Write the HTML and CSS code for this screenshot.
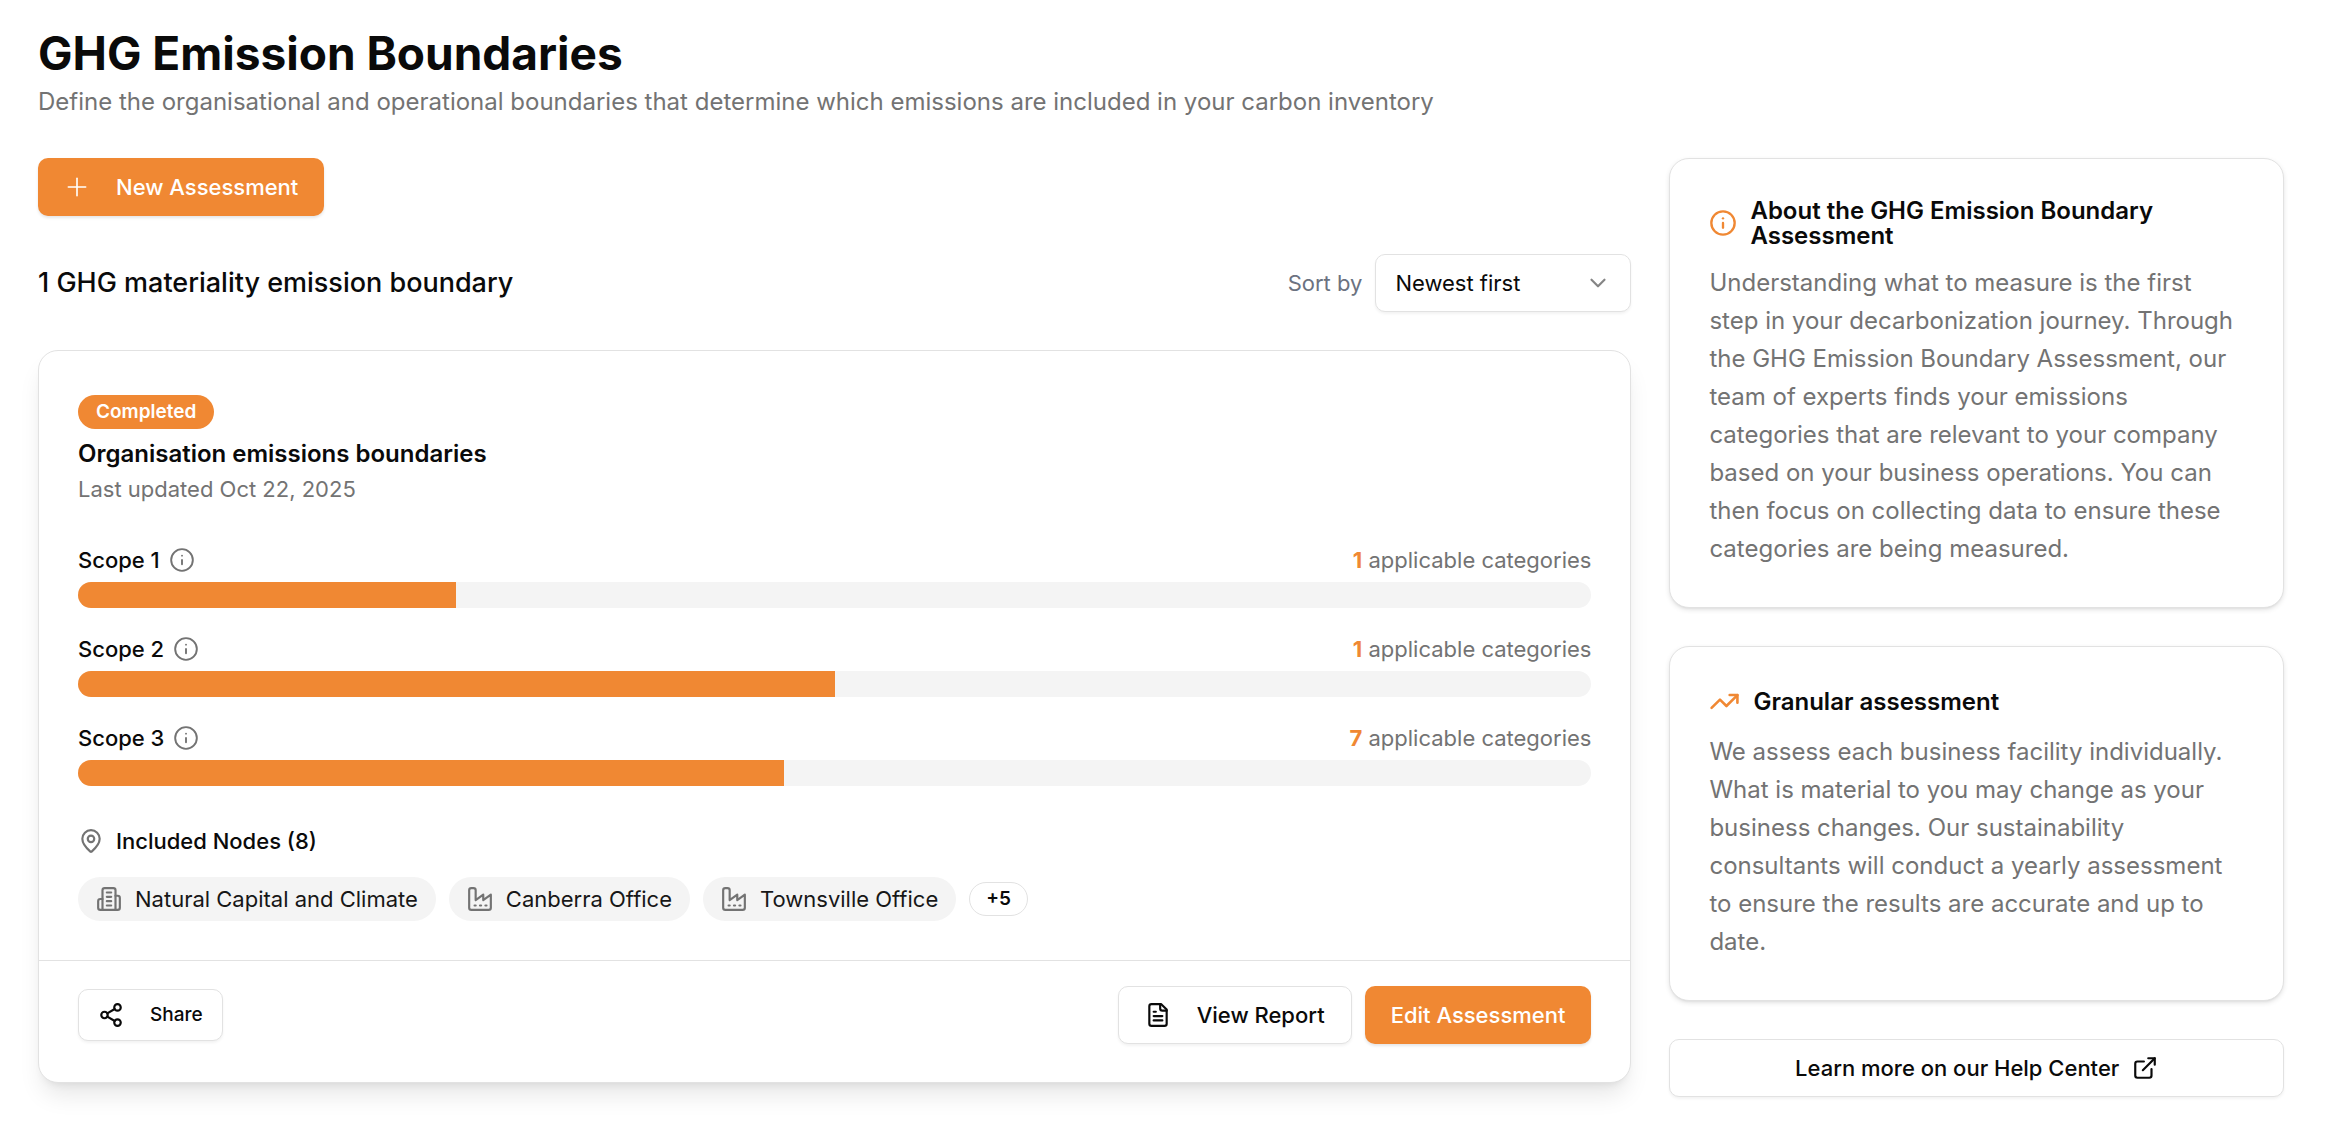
FILE: index.html
```html
<!DOCTYPE html>
<html lang="en">

<head>
    <meta charset="UTF-8">
    <meta name="viewport" content="width=device-width, initial-scale=1.0">
    <link rel="stylesheet" href="styles.css">

    <title>GHG Emission Boundaries</title>
</head>

<body>

    <header class="page-header">
        <h1>GHG Emission Boundaries</h1>
        <p>Define the organisational and operational boundaries that determine which emissions are included in your carbon inventory</p>
    </header>

    <div class="layout">

        <main class="content">
            <button type="button" class="btn btn-primary btn-new">
                <svg class="icon" viewBox="0 0 24 24"><path d="M4 12h16"/><path d="M12 4v16"/></svg>
                New Assessment
            </button>

            <div class="list-header">
                <h2>1 GHG materiality emission boundary</h2>
                <div class="sort">
                    <label for="sort">Sort by</label>
                    <div class="select-wrap">
                        <select id="sort">
                            <option>Newest first</option>
                            <option>Oldest first</option>
                        </select>
                        <svg class="icon chevron" viewBox="0 0 24 24"><path d="m6 9 6 6 6-6"/></svg>
                    </div>
                </div>
            </div>

            <article class="card assessment">
                <div class="card-body">
                    <span class="badge">Completed</span>
                    <h3>Organisation emissions boundaries</h3>
                    <p class="updated">Last updated Oct 22, 2025</p>

                    <div class="scopes">
                        <div class="scope">
                            <div class="scope-head">
                                <span class="scope-name">Scope 1</span>
                                <svg class="icon" viewBox="0 0 24 24"><circle cx="12" cy="12" r="10"/><path d="M12 16v-4"/><path d="M12 8h.01"/></svg>
                                <span class="scope-count"><b>1</b> applicable categories</span>
                            </div>
                            <div class="bar"><div class="bar-fill" style="width: 25%"></div></div>
                        </div>
                        <div class="scope">
                            <div class="scope-head">
                                <span class="scope-name">Scope 2</span>
                                <svg class="icon" viewBox="0 0 24 24"><circle cx="12" cy="12" r="10"/><path d="M12 16v-4"/><path d="M12 8h.01"/></svg>
                                <span class="scope-count"><b>1</b> applicable categories</span>
                            </div>
                            <div class="bar"><div class="bar-fill" style="width: 50%"></div></div>
                        </div>
                        <div class="scope">
                            <div class="scope-head">
                                <span class="scope-name">Scope 3</span>
                                <svg class="icon" viewBox="0 0 24 24"><circle cx="12" cy="12" r="10"/><path d="M12 16v-4"/><path d="M12 8h.01"/></svg>
                                <span class="scope-count"><b>7</b> applicable categories</span>
                            </div>
                            <div class="bar"><div class="bar-fill" style="width: 46.67%"></div></div>
                        </div>
                    </div>

                    <div class="nodes-title">
                        <svg class="icon" viewBox="0 0 24 24"><path d="M20 10c0 4.993-5.539 10.193-7.399 11.799a1 1 0 0 1-1.202 0C9.539 20.193 4 14.993 4 10a8 8 0 0 1 16 0"/><circle cx="12" cy="10" r="3"/></svg>
                        <h4>Included Nodes (8)</h4>
                    </div>
                    <div class="nodes">
                        <span class="chip">
                            <svg class="icon" viewBox="0 0 24 24"><path d="M6 22V4a2 2 0 0 1 2-2h8a2 2 0 0 1 2 2v18Z"/><path d="M6 12H4a2 2 0 0 0-2 2v6a2 2 0 0 0 2 2h2"/><path d="M18 9h2a2 2 0 0 1 2 2v9a2 2 0 0 1-2 2h-2"/><path d="M10 6h4"/><path d="M10 10h4"/><path d="M10 14h4"/><path d="M10 18h4"/></svg>
                            Natural Capital and Climate
                        </span>
                        <span class="chip">
                            <svg class="icon" viewBox="0 0 24 24"><path d="M2 20a2 2 0 0 0 2 2h16a2 2 0 0 0 2-2V8l-7 5V8l-7 5V4a2 2 0 0 0-2-2H4a2 2 0 0 0-2 2Z"/><path d="M17 18h1"/><path d="M12 18h1"/><path d="M7 18h1"/></svg>
                            Canberra Office
                        </span>
                        <span class="chip">
                            <svg class="icon" viewBox="0 0 24 24"><path d="M2 20a2 2 0 0 0 2 2h16a2 2 0 0 0 2-2V8l-7 5V8l-7 5V4a2 2 0 0 0-2-2H4a2 2 0 0 0-2 2Z"/><path d="M17 18h1"/><path d="M12 18h1"/><path d="M7 18h1"/></svg>
                            Townsville Office
                        </span>
                        <span class="chip-more">+5</span>
                    </div>
                </div>

                <div class="card-footer">
                    <button type="button" class="btn btn-outline btn-small">
                        <svg class="icon" viewBox="0 0 24 24"><circle cx="18" cy="5" r="3"/><circle cx="6" cy="12" r="3"/><circle cx="18" cy="19" r="3"/><path d="m8.59 13.51 6.83 3.98"/><path d="m15.41 6.51-6.82 3.98"/></svg>
                        Share
                    </button>
                    <div class="actions">
                        <button type="button" class="btn btn-outline btn-report">
                            <svg class="icon" viewBox="0 0 24 24"><path d="M15 2H6a2 2 0 0 0-2 2v16a2 2 0 0 0 2 2h12a2 2 0 0 0 2-2V7Z"/><path d="M14 2v4a2 2 0 0 0 2 2h4"/><path d="M10 9H8"/><path d="M16 13H8"/><path d="M16 17H8"/></svg>
                            View Report
                        </button>
                        <button type="button" class="btn btn-primary">Edit Assessment</button>
                    </div>
                </div>
            </article>
        </main>

        <aside class="sidebar">
            <section class="card info">
                <div class="info-title">
                    <svg class="icon icon-circle" viewBox="0 0 24 24"><circle cx="12" cy="12" r="10"/><path d="M12 16v-4"/><path d="M12 8h.01"/></svg>
                    <h3>About the GHG Emission Boundary Assessment</h3>
                </div>
                <p>Understanding what to measure is the first step in your decarbonization journey. Through the GHG Emission Boundary Assessment, our team of experts finds your emissions categories that are relevant to your company based on your business operations. You can then focus on collecting data to ensure these categories are being measured.</p>
            </section>

            <section class="card info">
                <div class="info-title">
                    <svg class="icon icon-trend" viewBox="0 0 24 24"><path d="M22 7 13.5 15.5 8.5 10.5 2 17"/><path d="M16 7h6v6"/></svg>
                    <h3>Granular assessment</h3>
                </div>
                <p>We assess each business facility individually. What is material to you may change as your business changes. Our sustainability consultants will conduct a yearly assessment to ensure the results are accurate and up to date.</p>
            </section>

            <a href="#" class="btn btn-outline help-link">
                Learn more on our Help Center
                <svg class="icon" viewBox="0 0 24 24"><path d="M15 3h6v6"/><path d="M10 14 21 3"/><path d="M18 13v6a2 2 0 0 1-2 2H5a2 2 0 0 1-2-2V8a2 2 0 0 1 2-2h6"/></svg>
            </a>
        </aside>

    </div> <!-- layout end -->

</body>

</html>
```
FILE: styles.css
```css
*{
    box-sizing: border-box;
    padding: 0;
    margin: 0;
}
body{
    font-family: Inter, "Noto Sans", sans-serif;
    font-size: 22px;
    line-height: 32px;
    color: #0a0a0a;
    background-color: #fff;
    padding: 25px 44px 38px 38px;
}
button, select{
    font: inherit;
    color: inherit;
}
.icon{
    width: 26px;
    height: 26px;
    flex: none;
    fill: none;
    stroke: currentColor;
    stroke-width: 2;
    stroke-linecap: round;
    stroke-linejoin: round;
}

/* header */
.page-header{
    margin-bottom: 36px;
}
.page-header h1{
    font-size: 46px;
    font-weight: 700;
    line-height: 56px;
}
.page-header p{
    font-size: 24px;
    line-height: 41px;
    color: #737373;
}

.layout{
    display: grid;
    grid-template-columns: repeat(7, 1fr);
    gap: 38px;
    align-items: start;
}
.content{
    grid-column: span 5;
}
.sidebar{
    grid-column: span 2;
    display: flex;
    flex-direction: column;
    gap: 38px;
}

/* buttons */
.btn{
    display: flex;
    align-items: center;
    justify-content: center;
    height: 58px;
    padding: 0 26px;
    border: none;
    border-radius: 10px;
    font-weight: 500;
    box-shadow: 0 2px 3px rgba(0, 0, 0, .1);
}
.btn-primary{
    background-color: #f08833;
    color: #fff;
}
.btn-outline{
    background-color: #fff;
    border: 1px solid #e2e2e2;
    box-shadow: 0 2px 3px rgba(0, 0, 0, .05);
}
.btn-new{
    gap: 26px;
}
.btn-new .icon{
    stroke-width: 1.5;
}
.btn-small{
    height: 52px;
    padding: 0 19px;
    gap: 26px;
    font-size: 19px;
}
.btn-report{
    gap: 26px;
}

/* list header */
.list-header{
    display: flex;
    align-items: center;
    justify-content: space-between;
    margin: 38px 0;
}
.list-header h2{
    font-size: 27px;
    font-weight: 500;
}
.sort{
    display: flex;
    align-items: center;
    gap: 13px;
}
.sort label{
    color: #6b7280;
}
.select-wrap{
    position: relative;
}
.select-wrap select{
    appearance: none;
    width: 256px;
    height: 58px;
    padding: 0 19px;
    border: 1px solid #e2e2e2;
    border-radius: 10px;
    background-color: #fff;
    box-shadow: 0 2px 3px rgba(0, 0, 0, .05);
}
.chevron{
    position: absolute;
    top: 16px;
    right: 20px;
    color: #858585;
    pointer-events: none;
}

/* cards */
.card{
    border: 1px solid #e2e2e2;
    border-radius: 20px;
    background-color: #fff;
}
.assessment{
    box-shadow: 0 16px 24px -5px rgba(0, 0, 0, .1), 0 6px 10px -6px rgba(0, 0, 0, .1);
}
.card-body{
    padding: 44px 39px 39px;
}
.badge{
    display: block;
    width: fit-content;
    padding: 1px 18px;
    border-radius: 17px;
    background-color: #f08833;
    color: #fff;
    font-size: 19px;
    font-weight: 600;
}
.card h3{
    font-size: 24px;
    font-weight: 600;
}
.assessment h3{
    margin-top: 9px;
}
.updated{
    margin-top: 3px;
    color: #737373;
}
.scopes{
    display: flex;
    flex-direction: column;
    gap: 25px;
    margin-top: 39px;
}
.scope-head{
    display: flex;
    align-items: center;
    gap: 9px;
    margin-bottom: 6px;
    color: #737373;
}
.scope-head .icon{
    stroke-width: 1.75;
}
.scope-name{
    font-weight: 500;
    color: #0a0a0a;
}
.scope-count{
    margin-left: auto;
}
.scope-count b{
    font-weight: 700;
    color: #f08833;
}
.bar{
    height: 26px;
    border-radius: 13px;
    background-color: #f4f4f4;
    overflow: hidden;
}
.bar-fill{
    height: 100%;
    background-color: #f08833;
}

/* nodes */
.nodes-title{
    display: flex;
    align-items: center;
    gap: 12px;
    margin-top: 39px;
}
.nodes-title h4{
    font-weight: 500;
}
.nodes-title .icon, .chip .icon{
    color: #737373;
}
.nodes{
    display: flex;
    flex-wrap: wrap;
    align-items: center;
    gap: 13px;
    margin-top: 20px;
}
.chip{
    display: flex;
    align-items: center;
    gap: 13px;
    padding: 6px 18px;
    border-radius: 22px;
    background-color: #f4f4f4;
    color: #171717;
}
.chip-more{
    padding: 0 16px;
    border: 1px solid #e2e2e2;
    border-radius: 17px;
    font-size: 19px;
    font-weight: 600;
}
.card-footer{
    display: flex;
    align-items: center;
    justify-content: space-between;
    padding: 25px 39px 38px;
    border-top: 1px solid #e2e2e2;
}
.actions{
    display: flex;
    gap: 13px;
}

/* sidebar */
.info{
    padding: 39px;
    box-shadow: 0 2px 5px rgba(0, 0, 0, .1), 0 2px 3px -2px rgba(0, 0, 0, .1);
}
.info-title{
    display: flex;
    align-items: center;
    gap: 13px;
    margin-bottom: 16px;
    color: #f08833;
}
.info-title h3{
    line-height: 25px;
    color: #0a0a0a;
}
.icon-circle{
    width: 28px;
    height: 28px;
}
.icon-trend{
    width: 31px;
    height: 31px;
}
.info p{
    font-size: 24px;
    line-height: 38px;
    color: #737373;
}
.help-link{
    gap: 13px;
    color: #0a0a0a;
    text-decoration: none;
}
```
